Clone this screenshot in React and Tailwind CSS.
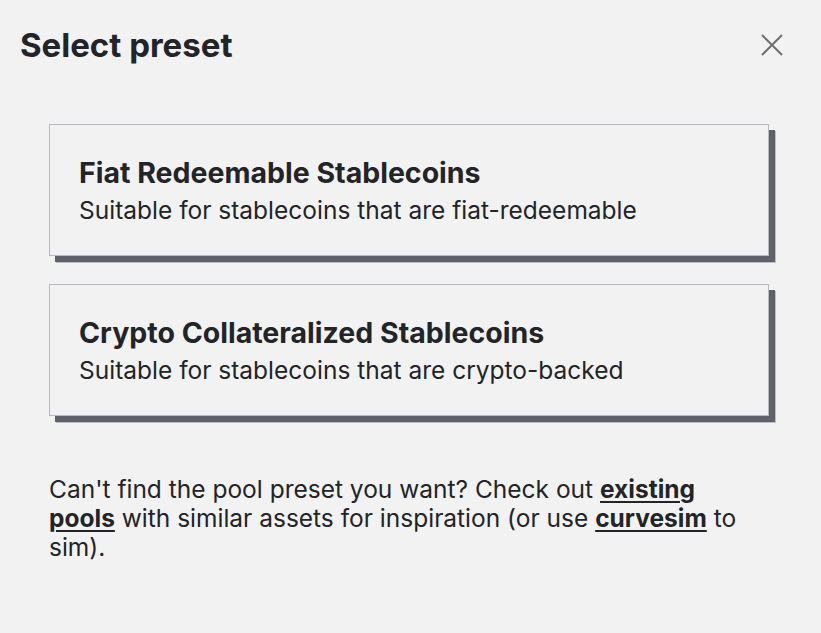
import React from 'react'

const presets = [
  {
    title: 'Fiat Redeemable Stablecoins',
    description: 'Suitable for stablecoins that are fiat-redeemable',
  },
  {
    title: 'Crypto Collateralized Stablecoins',
    description: 'Suitable for stablecoins that are crypto-backed',
  },
]

function PresetCard({ title, description }) {
  return (
    <button
      type="button"
      className="w-[720px] h-[132px] border border-[#b9b9c3] bg-[#f2f2f2] text-left pl-[29px] flex flex-col justify-center shadow-[6px_6px_0_0_#5d6168,7px_7px_0_0_#bdbec4]"
    >
      <span className="text-[28.5px] leading-[34px] font-bold text-[#222428]">{title}</span>
      <span className="text-[24.5px] leading-[30px] text-[#222428] mt-[5px]">{description}</span>
    </button>
  )
}

export default function App() {
  return (
    <div
      className="w-[821px] h-[633px] bg-[#f2f2f2] text-[#222428] overflow-hidden"
      style={{ fontFamily: 'Inter, "Noto Sans", sans-serif' }}
    >
      <div className="flex items-center justify-between pl-[20px] pr-[37px] pt-[25px]">
        <h2 className="text-[33px] leading-[40px] font-bold">Select preset</h2>
        <button type="button" className="text-[#6f6f6f]" aria-label="Close">
          <svg width="24" height="24" viewBox="0 0 24 24" fill="none" stroke="currentColor" strokeWidth="2">
            <path d="M2 2L22 22M22 2L2 22" />
          </svg>
        </button>
      </div>

      <div className="flex flex-col gap-[28px] pl-[49px] mt-[59px]">
        {presets.map((p) => (
          <PresetCard key={p.title} title={p.title} description={p.description} />
        ))}
      </div>

      <p className="ml-[49px] w-[706px] mt-[59px] text-[24.5px] leading-[29px]">
        Can't find the pool preset you want? Check out{' '}
        <a href="#" className="font-bold underline decoration-2 underline-offset-[3px]">existing pools</a> with similar
        assets for inspiration (or use{' '}
        <a href="#" className="font-bold underline decoration-2 underline-offset-[3px]">curvesim</a> to sim).
      </p>
    </div>
  )
}
